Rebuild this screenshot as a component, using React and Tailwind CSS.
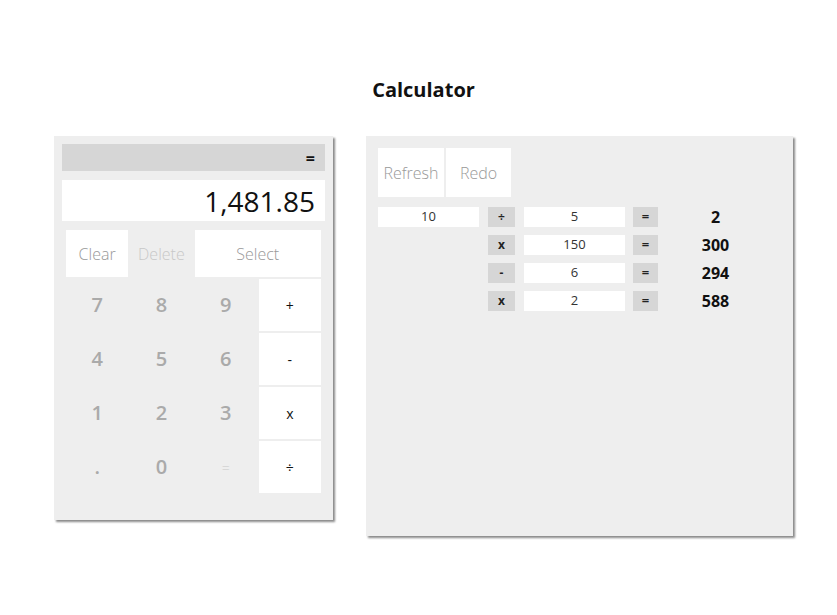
import React from "react";

const keys = [
  ["7", "8", "9", "+"],
  ["4", "5", "6", "-"],
  ["1", "2", "3", "x"],
  [".", "0", "=", "÷"],
];

const history = [
  { a: "10", op: "÷", b: "5", r: "2" },
  { a: null, op: "x", b: "150", r: "300" },
  { a: null, op: "-", b: "6", r: "294" },
  { a: null, op: "x", b: "2", r: "588" },
];

export default function App() {
  return (
    <div className="min-h-[615px] bg-white pl-[54px] pt-[76px] font-['Open_Sans',sans-serif]">
      <div className="w-[739px]">
        <h1 className="text-center text-[20px] leading-[28px] font-bold text-[#111] m-0">Calculator</h1>

        <div className="flex items-start gap-[33px] mt-[32px]">
          {/* Calculator */}
          <div className="w-[279px] bg-[#eeeeee] p-2 pb-[26px] shadow-[2px_2px_2px_#8a8a8a]">
            <div className="h-[27px] bg-[#d6d6d6] flex items-center justify-end pr-[10px] text-[16px] font-bold text-[#111]">=</div>
            <div className="h-[41px] bg-white mt-[9px] flex items-center justify-end pr-[10px] text-[28px] text-[#111]">1,481.85</div>

            <div className="mx-[3px] mt-[8px] grid grid-cols-4">
              <div className="m-px h-[47px] bg-white flex items-center justify-center text-[16px] font-light text-[#999]">Clear</div>
              <div className="m-px h-[47px] flex items-center justify-center text-[16px] font-light text-[#c8c8c8]">Delete</div>
              <div className="col-span-2 m-px h-[47px] bg-white flex items-center justify-center text-[16px] font-light text-[#999]">Select</div>
            </div>

            <div className="mx-[3px] grid grid-cols-4">
              {keys.flat().map((k, i) => {
                const op = i % 4 === 3;
                const eq = k === "=";
                return (
                  <div
                    key={i}
                    className={
                      op
                        ? "mx-px my-px h-[52px] bg-white flex items-center justify-center text-[14px] text-[#111]"
                        : eq
                        ? "h-[54px] flex items-center justify-center text-[14px] font-light text-[#c8c8c8]"
                        : "h-[54px] flex items-center justify-center text-[20px] font-semibold text-[#aaaaaa]"
                    }
                  >
                    {k}
                  </div>
                );
              })}
            </div>
          </div>

          {/* History */}
          <div className="w-[427px] h-[400px] bg-[#eeeeee] p-3 shadow-[2px_2px_2px_#8a8a8a]">
            <div className="flex gap-[2px]">
              <div className="w-[66px] h-[49px] bg-white flex items-center justify-center text-[16px] font-light text-[#999]">Refresh</div>
              <div className="w-[65px] h-[49px] bg-white flex items-center justify-center text-[16px] font-light text-[#999]">Redo</div>
            </div>

            <div className="mt-[10px] flex flex-col gap-[8px]">
              {history.map((h, i) => (
                <div key={i} className="flex items-center h-[20px]">
                  <div className={`w-[101px] h-[20px] flex items-center justify-center text-[13px] text-[#333] ${h.a ? "bg-white" : ""}`}>{h.a}</div>
                  <div className="ml-[9px] w-[27px] h-[20px] bg-[#d6d6d6] flex items-center justify-center text-[12px] font-bold text-[#222]">{h.op}</div>
                  <div className="ml-[9px] w-[101px] h-[20px] bg-white flex items-center justify-center text-[13px] text-[#333]">{h.b}</div>
                  <div className="ml-[8px] w-[25px] h-[20px] bg-[#d6d6d6] flex items-center justify-center text-[13px] font-bold text-[#222]">=</div>
                  <div className="w-[115px] text-center text-[16px] font-bold text-[#111]">{h.r}</div>
                </div>
              ))}
            </div>
          </div>
        </div>
      </div>
    </div>
  );
}
